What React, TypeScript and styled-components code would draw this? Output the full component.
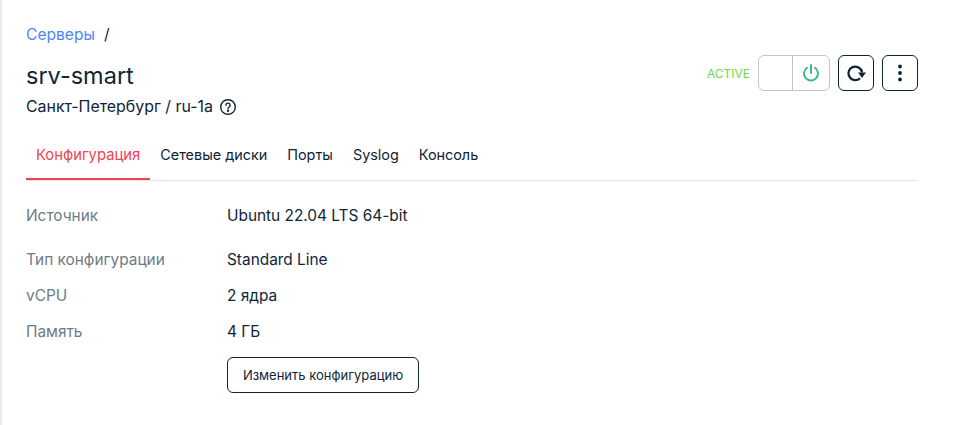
import React from "react";
import styled, { createGlobalStyle } from "styled-components";

const GlobalStyle = createGlobalStyle`
  html, body {
    margin: 0;
    padding: 0;
    background: #fff;
    font-family: "Inter", "Noto Sans", sans-serif;
    color: #0f2537;
  }
`;

const Page = styled.div`
  box-sizing: border-box;
  width: 961px;
  height: 425px;
  overflow: hidden;
  border-left: 2px solid #ebebeb;
  padding: 25px 43px 0 24px;
`;

const Breadcrumbs = styled.div`
  display: flex;
  gap: 9px;
  height: 20px;
  font-size: 15.6px;
  line-height: 20px;
`;

const CrumbLink = styled.a`
  color: #4f86f7;
`;

const Header = styled.div`
  display: flex;
  justify-content: space-between;
  align-items: flex-start;
  margin-top: 7px;
`;

const Title = styled.h1`
  margin: 4px 0 0;
  height: 40px;
  font-size: 23.5px;
  line-height: 40px;
  font-weight: 400;
`;

const Location = styled.div`
  display: flex;
  align-items: center;
  gap: 6px;
  height: 20px;
  margin-top: 1px;
  font-size: 15.9px;
  line-height: 20px;
`;

const Actions = styled.div`
  display: flex;
  align-items: center;
  margin-top: 3px;
`;

const Status = styled.span`
  margin-right: 8px;
  font-size: 12px;
  color: #72d64a;
`;

const PowerToggle = styled.div`
  box-sizing: border-box;
  display: flex;
  width: 72px;
  height: 36px;
  margin-right: 8px;
  border: 1px solid #c0c5ca;
  border-radius: 6px;
`;

const ToggleOff = styled.div`
  width: 33px;
`;

const ToggleOn = styled.div`
  flex: 1;
  display: flex;
  align-items: center;
  justify-content: center;
  border-left: 1px solid #c0c5ca;
`;

const IconButton = styled.button`
  box-sizing: border-box;
  display: flex;
  align-items: center;
  justify-content: center;
  width: 36px;
  height: 36px;
  margin-left: 8px;
  padding: 0;
  background: #fff;
  border: 1px solid #0f2537;
  border-radius: 6px;
  &:first-of-type {
    margin-left: 0;
  }
`;

const Tabs = styled.nav`
  display: flex;
  height: 53px;
  margin-top: 10px;
  border-bottom: 1px solid #e2e2e2;
`;

const Tab = styled.div<{ $active?: boolean }>`
  box-sizing: border-box;
  height: 53px;
  padding: 7px 10px 0;
  font-size: ${(p) => (p.$active ? "14.8px" : "14.4px")};
  line-height: 42px;
  color: ${(p) => (p.$active ? "#ef4350" : "#0f2537")};
  border-bottom: 2px solid ${(p) => (p.$active ? "#ef4350" : "transparent")};
`;

const Specs = styled.div`
  display: grid;
  grid-template-columns: 201px 1fr;
  margin-top: 17px;
  font-size: 15.4px;
  line-height: 36px;
`;

const Label = styled.div<{ $gap?: boolean }>`
  color: #6f7b85;
  margin-bottom: ${(p) => (p.$gap ? "8px" : "0")};
`;

const Value = styled.div<{ $gap?: boolean }>`
  color: #0f2537;
  margin-bottom: ${(p) => (p.$gap ? "8px" : "0")};
`;

const ChangeButton = styled.button`
  box-sizing: border-box;
  grid-column: 2;
  width: 192px;
  height: 36px;
  margin-top: 7px;
  padding: 0;
  background: #fff;
  border: 1px solid #0f2537;
  border-radius: 6px;
  font-family: inherit;
  font-size: 13px;
  color: #0f2537;
`;

export default function App() {
  return (
    <>
      <GlobalStyle />
      <Page>
        <Breadcrumbs>
          <CrumbLink>Серверы</CrumbLink>
          <span>/</span>
        </Breadcrumbs>
        <Header>
          <div>
            <Title>srv-smart</Title>
            <Location>
              Санкт-Петербург / ru-1a
              <svg width="18" height="18" viewBox="0 0 18 18" fill="none" stroke="#0f2537" strokeWidth="1.4">
                <circle cx="9" cy="9" r="7.3" />
                <path d="M6.9 7.2a2.1 2.1 0 1 1 3.2 1.8c-.7.4-1.1.8-1.1 1.6" strokeLinecap="round" />
                <circle cx="9" cy="12.8" r=".5" fill="#0f2537" />
              </svg>
            </Location>
          </div>
          <Actions>
            <Status>ACTIVE</Status>
            <PowerToggle>
              <ToggleOff />
              <ToggleOn>
                <svg width="18" height="18" viewBox="0 0 18 18" fill="none" stroke="#3dbb80" strokeWidth="2" strokeLinecap="round">
                  <path d="M9 1v8" />
                  <path d="M5 3.8a7 7 0 1 0 8 0" />
                </svg>
              </ToggleOn>
            </PowerToggle>
            <IconButton>
              <svg width="22" height="22" viewBox="0 0 22 22" fill="none" stroke="#0f2537" strokeWidth="2.3">
                <path d="M15 16.2A6.8 6.8 0 1 1 15 6.5C16.2 7.5 16.8 8.6 17 10.5" />
                <path d="M13 10.5h8l-4 5.5z" fill="#0f2537" stroke="none" />
              </svg>
            </IconButton>
            <IconButton>
              <svg width="18" height="18" viewBox="0 0 18 18" fill="#0f2537">
                <circle cx="9" cy="2.5" r="1.9" />
                <circle cx="9" cy="9" r="1.9" />
                <circle cx="9" cy="15.5" r="1.9" />
              </svg>
            </IconButton>
          </Actions>
        </Header>
        <Tabs>
          <Tab $active>Конфигурация</Tab>
          <Tab>Сетевые диски</Tab>
          <Tab>Порты</Tab>
          <Tab>Syslog</Tab>
          <Tab>Консоль</Tab>
        </Tabs>
        <Specs>
          <Label $gap>Источник</Label>
          <Value $gap>Ubuntu 22.04 LTS 64-bit</Value>
          <Label>Тип конфигурации</Label>
          <Value>Standard Line</Value>
          <Label>vCPU</Label>
          <Value>2 ядра</Value>
          <Label>Память</Label>
          <Value>4 ГБ</Value>
          <ChangeButton>Изменить конфигурацию</ChangeButton>
        </Specs>
      </Page>
    </>
  );
}
